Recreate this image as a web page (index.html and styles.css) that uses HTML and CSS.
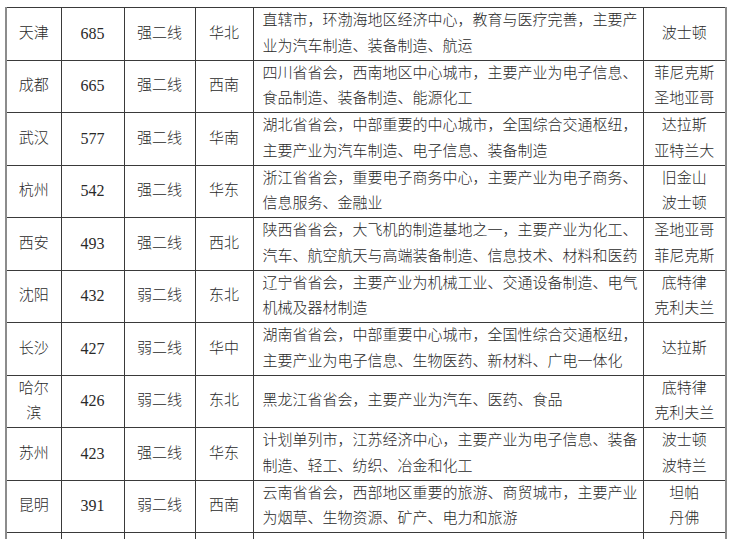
FILE: index.html
```html
<!DOCTYPE html>
<html lang="zh-CN">
<head>
<meta charset="utf-8">
<title>二线城市</title>
<link rel="stylesheet" href="styles.css">
</head>
<body>
<table class="cities">
  <colgroup>
    <col class="c-name">
    <col class="c-num">
    <col class="c-tier">
    <col class="c-region">
    <col class="c-desc">
    <col class="c-us">
  </colgroup>
  <tbody>
    <tr>
      <td>天津</td><td class="num">685</td><td>强二线</td><td>华北</td>
      <td class="desc">直辖市，环渤海地区经济中心，教育与医疗完善，主要产<br>业为汽车制造、装备制造、航运</td>
      <td>波士顿</td>
    </tr>
    <tr>
      <td>成都</td><td class="num">665</td><td>强二线</td><td>西南</td>
      <td class="desc">四川省省会，西南地区中心城市，主要产业为电子信息、<br>食品制造、装备制造、能源化工</td>
      <td>菲尼克斯<br>圣地亚哥</td>
    </tr>
    <tr>
      <td>武汉</td><td class="num">577</td><td>强二线</td><td>华南</td>
      <td class="desc">湖北省省会，中部重要的中心城市，全国综合交通枢纽，<br>主要产业为汽车制造、电子信息、装备制造</td>
      <td>达拉斯<br>亚特兰大</td>
    </tr>
    <tr>
      <td>杭州</td><td class="num">542</td><td>强二线</td><td>华东</td>
      <td class="desc">浙江省省会，重要电子商务中心，主要产业为电子商务、<br>信息服务、金融业</td>
      <td>旧金山<br>波士顿</td>
    </tr>
    <tr>
      <td>西安</td><td class="num">493</td><td>强二线</td><td>西北</td>
      <td class="desc">陕西省省会，大飞机的制造基地之一，主要产业为化工、<br>汽车、航空航天与高端装备制造、信息技术、材料和医药</td>
      <td>圣地亚哥<br>菲尼克斯</td>
    </tr>
    <tr>
      <td>沈阳</td><td class="num">432</td><td>弱二线</td><td>东北</td>
      <td class="desc">辽宁省省会，主要产业为机械工业、交通设备制造、电气<br>机械及器材制造</td>
      <td>底特律<br>克利夫兰</td>
    </tr>
    <tr>
      <td>长沙</td><td class="num">427</td><td>弱二线</td><td>华中</td>
      <td class="desc">湖南省省会，中部重要中心城市，全国性综合交通枢纽，<br>主要产业为电子信息、生物医药、新材料、广电一体化</td>
      <td>达拉斯</td>
    </tr>
    <tr>
      <td>哈尔<br>滨</td><td class="num">426</td><td>弱二线</td><td>东北</td>
      <td class="desc">黑龙江省省会，主要产业为汽车、医药、食品</td>
      <td>底特律<br>克利夫兰</td>
    </tr>
    <tr>
      <td>苏州</td><td class="num">423</td><td>强二线</td><td>华东</td>
      <td class="desc">计划单列市，江苏经济中心，主要产业为电子信息、装备<br>制造、轻工、纺织、冶金和化工</td>
      <td>波士顿<br>波特兰</td>
    </tr>
    <tr>
      <td>昆明</td><td class="num">391</td><td>弱二线</td><td>西南</td>
      <td class="desc">云南省省会，西部地区重要的旅游、商贸城市，主要产业<br>为烟草、生物资源、矿产、电力和旅游</td>
      <td>坦帕<br>丹佛</td>
    </tr>
    <tr class="more">
      <td></td><td></td><td></td><td></td><td class="desc"></td><td></td>
    </tr>
  </tbody>
</table>
</body>
</html>
```

FILE: styles.css
```css
html, body {
  margin: 0;
  padding: 0;
  background: #ffffff;
  overflow: hidden;
}

.cities {
  margin: 7px 0 0 5px;
  border-collapse: collapse;
  table-layout: fixed;
  width: 720px;
  border-top: 1px solid #8c8c8c;
  border-left: 2px solid #8c8c8c;
  border-right: 2px solid #8c8c8c;
  font-family: "Liberation Serif", "Noto Sans CJK SC", serif;
  font-size: 15px;
  font-weight: 300;
  color: #2a2a2a;
}

.c-name { width: 55px; }
.c-num { width: 63px; }
.c-tier { width: 71px; }
.c-region { width: 58px; }
.c-desc { width: 390px; }
.c-us { width: 83px; }

.cities tr {
  height: 52.5px;
}

.cities td {
  border: 1px solid #3a3a3a;
  padding: 0 4px;
  text-align: center;
  vertical-align: middle;
  line-height: 25.75px;
  white-space: nowrap;
}

.cities td.num {
  font-size: 16px;
}

.cities td.desc {
  text-align: left;
  padding: 0 4px 0 9px;
}

.cities tr.more {
  height: 52px;
}
```
